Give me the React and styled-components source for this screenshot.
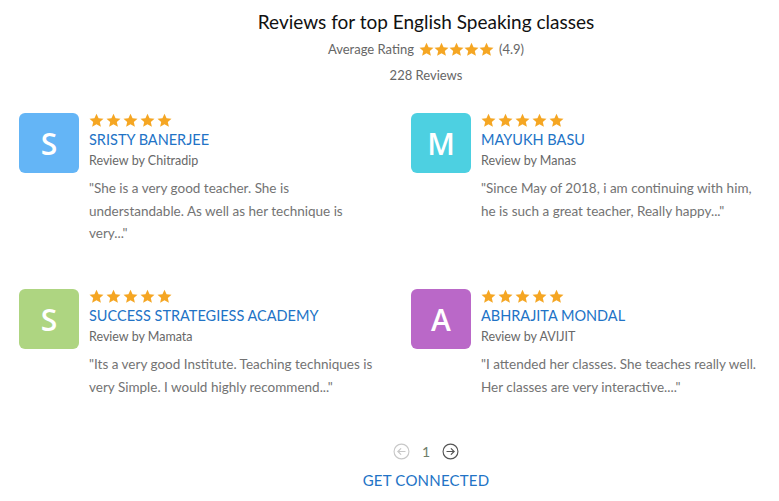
import React from 'react'
import styled, { createGlobalStyle } from 'styled-components'

const GlobalStyle = createGlobalStyle`
  body {
    margin: 0;
    background: #fff;
    font-family: "Lato", "Open Sans", sans-serif;
    overflow: hidden;
  }
`

const Page = styled.div`
  width: 779px;
  height: 501px;
  padding: 0 0 0 19px;
  box-sizing: border-box;
`

/* header and footer are centred on x=426, not on the page */
const Header = styled.div`
  display: flex;
  flex-direction: column;
  align-items: center;
  width: 779px;
  box-sizing: border-box;
  margin-left: -19px;
  padding: 10px 0 0 73px;
`

const Title = styled.h2`
  margin: 0;
  font-size: 19px;
  font-weight: 400;
  color: #111;
  line-height: 24px;
`

const RatingRow = styled.div`
  display: flex;
  align-items: center;
  gap: 5px;
  margin-top: 6px;
  font-size: 13px;
  color: #666;
  line-height: 18px;
`

const Count = styled.div`
  margin-top: 8px;
  font-size: 13px;
  color: #666;
  line-height: 18px;
`

const Grid = styled.div`
  display: grid;
  grid-template-columns: 392px 368px;
  margin-top: 29px;
`

const Card = styled.div`
  display: flex;
  gap: 10px;
  height: 176px;
`

const Avatar = styled.div`
  flex: none;
  width: 60px;
  height: 60px;
  border-radius: 6px;
  background: ${p => p.$bg};
  color: #fff;
  font-family: "Open Sans", sans-serif;
  font-weight: 600;
  font-size: 30px;
  display: flex;
  align-items: center;
  justify-content: center;
`

const Body = styled.div`
  display: flex;
  flex-direction: column;
`

const Stars = styled.div`
  display: flex;
  gap: ${p => p.$gap}px;
`

const Name = styled.div`
  margin-top: 3px;
  font-size: 14.5px;
  color: #2273c6;
  line-height: 18px;
`

const By = styled.div`
  margin-top: 4px;
  font-size: 12.5px;
  color: #686868;
  line-height: 16px;
`

const Quote = styled.p`
  margin: 8px 0 0;
  font-size: 13.5px;
  color: #737373;
  line-height: 22.5px;
  max-width: 286px;
`

const Footer = styled.div`
  display: flex;
  flex-direction: column;
  align-items: center;
  width: 779px;
  box-sizing: border-box;
  margin-left: -19px;
  margin-top: -22px;
  padding-left: 73px;
`

const Pager = styled.div`
  display: flex;
  align-items: center;
  gap: 12px;
`

const PageNum = styled.span`
  font-size: 14px;
  color: #6f7d6a;
`

const Connect = styled.a`
  margin-top: 11px;
  font-size: 15px;
  color: #2273c6;
  text-decoration: none;
  letter-spacing: 0.2px;
`

const Star = ({ size }) => (
  <svg width={size} height={size} viewBox="0 0 24 24">
    <path
      d="M12 1l3.3 7.2 7.9.8-5.9 5.3 1.7 7.8L12 18.1l-7 4 1.7-7.8L.8 9l7.9-.8z"
      fill="#f5a623"
    />
  </svg>
)

const FiveStars = ({ size, gap }) => (
  <Stars $gap={gap}>
    {[0, 1, 2, 3, 4].map(i => <Star key={i} size={size} />)}
  </Stars>
)

const Arrow = ({ dir, color }) => (
  <svg width="17" height="17" viewBox="0 0 24 24" fill="none" stroke={color} strokeWidth="1.6" strokeLinecap="round" strokeLinejoin="round">
    <circle cx="12" cy="12" r="10.5" />
    {dir === 'left'
      ? <><path d="M17 12H7" /><path d="M11 8l-4 4 4 4" /></>
      : <><path d="M7 12h10" /><path d="M13 8l4 4-4 4" /></>}
  </svg>
)

const reviews = [
  { letter: 'S', bg: '#64b5f6', name: 'SRISTY BANERJEE', by: 'Chitradip', text: '"She is a very good teacher. She is understandable. As well as her technique is very..."' },
  { letter: 'M', bg: '#4dd0e1', name: 'MAYUKH BASU', by: 'Manas', text: '"Since May of 2018, i am continuing with him, he is such a great teacher, Really happy..."' },
  { letter: 'S', bg: '#aed581', name: 'SUCCESS STRATEGIESS ACADEMY', by: 'Mamata', text: '"Its a very good Institute. Teaching techniques is very Simple. I would highly recommend..."' },
  { letter: 'A', bg: '#ba68c8', name: 'ABHRAJITA MONDAL', by: 'AVIJIT', text: '"I attended her classes. She teaches really well. Her classes are very interactive...."' },
]

export default function App() {
  return (
    <Page>
      <GlobalStyle />
      <Header>
        <Title>Reviews for top English Speaking classes</Title>
        <RatingRow>
          Average Rating
          <FiveStars size={15} gap={0} />
          (4.9)
        </RatingRow>
        <Count>228 Reviews</Count>
      </Header>

      <Grid>
        {reviews.map((r, i) => (
          <Card key={i}>
            <Avatar $bg={r.bg}>{r.letter}</Avatar>
            <Body>
              <FiveStars size={15} gap={2} />
              <Name>{r.name}</Name>
              <By>Review by {r.by}</By>
              <Quote>{r.text}</Quote>
            </Body>
          </Card>
        ))}
      </Grid>

      <Footer>
        <Pager>
          <Arrow dir="left" color="#c8c8c8" />
          <PageNum>1</PageNum>
          <Arrow dir="right" color="#555" />
        </Pager>
        <Connect href="#">GET CONNECTED</Connect>
      </Footer>
    </Page>
  )
}
